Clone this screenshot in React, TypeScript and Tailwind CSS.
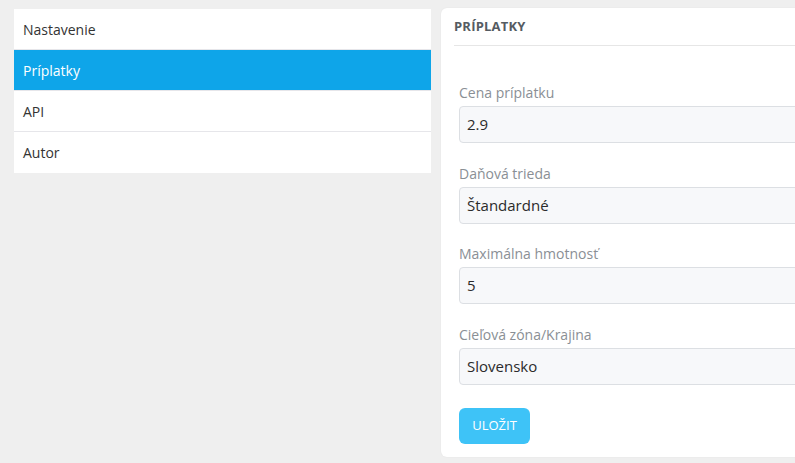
import React from "react";

const navItems = [
  { label: "Nastavenie", active: false },
  { label: "Príplatky", active: true },
  { label: "API", active: false },
  { label: "Autor", active: false },
];

const fields = [
  { label: "Cena príplatku", value: "2.9" },
  { label: "Daňová trieda", value: "Štandardné" },
  { label: "Maximálna hmotnosť", value: "5" },
  { label: "Cieľová zóna/Krajina", value: "Slovensko" },
];

export default function App() {
  return (
    <div
      className="w-[795px] h-[463px] overflow-hidden bg-[#efefef] flex items-start gap-[10px] pl-[14px] pt-[8px]"
      style={{ fontFamily: '"Open Sans", "Noto Sans", sans-serif' }}
    >
      <div className="w-[417px] shrink-0 mt-[1px] flex flex-col bg-white">
        {navItems.map((item, i) => (
          <div
            key={item.label}
            className={`h-[41px] flex items-center pl-[9px] text-[14px] ${
              i < navItems.length - 1 ? "border-b border-[#e6e6ea]" : ""
            } ${item.active ? "bg-[#0ea5e9] text-white border-[#0ea5e9]" : "text-[#333]"}`}
          >
            {item.label}
          </div>
        ))}
      </div>
      <div className="w-[420px] shrink-0 h-[449px] bg-white rounded-[6px] shadow-[0_0_2px_rgba(0,0,0,0.06)]">
        <div className="mx-[13px] h-[38px] flex items-center border-b border-[#e6e6e6]">
          <span className="text-[13px] font-bold text-[#555b62] tracking-[0.2px]">PRÍPLATKY</span>
        </div>
        <div className="px-[18px] pt-[37px]">
          {fields.map((f, i) => (
            <div key={f.label} className={i > 0 ? "mt-[20.6px]" : ""}>
              <div className="h-[20px] leading-[20px] text-[14px] text-[#8a8f95] mb-[3px]">{f.label}</div>
              <div className="h-[37px] bg-[#f7f8fa] border border-[#dcdfe3] rounded-[4px] flex items-center pl-[7px] text-[15px] text-[#2b2b2b]">
                {f.value}
              </div>
            </div>
          ))}
          <button className="mt-[23px] w-[71px] h-[36px] rounded-[6px] bg-[#3ec3f7] text-white text-[13px] font-medium">
            ULOŽIT
          </button>
        </div>
      </div>
    </div>
  );
}
